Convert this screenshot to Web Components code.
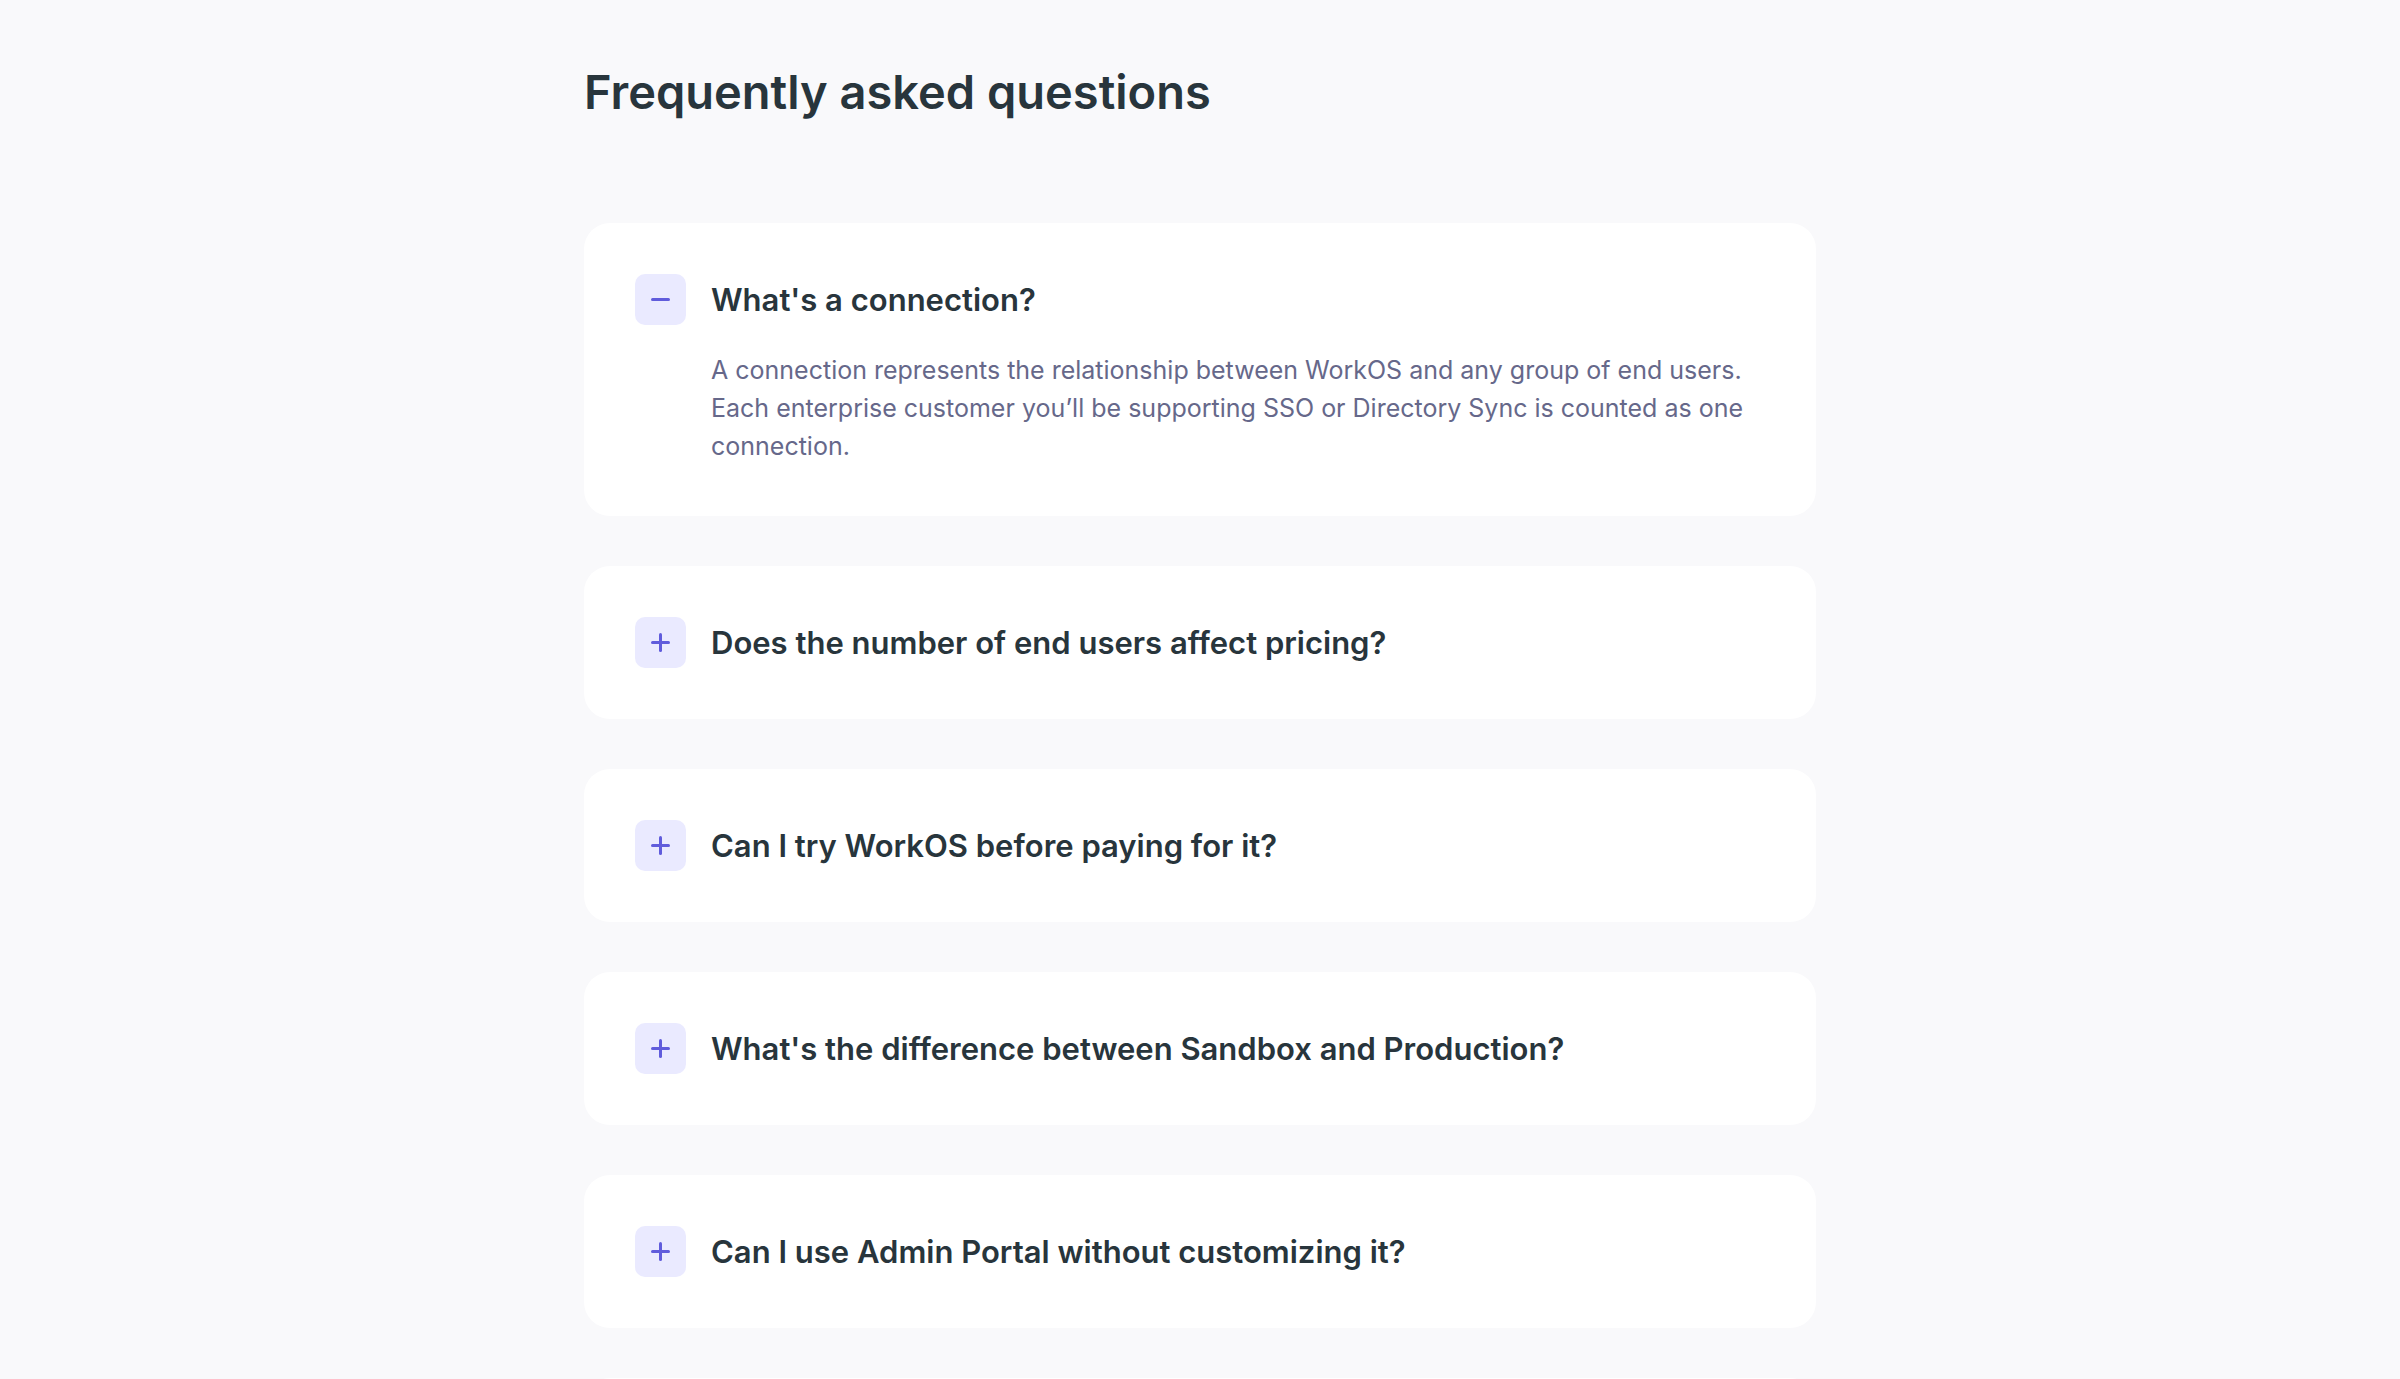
<!DOCTYPE html>
<html lang="en">
<head>
<meta charset="utf-8">
<meta name="viewport" content="width=device-width, initial-scale=1">
<title>Frequently asked questions</title>
<style>
  html {
    scrollbar-width: none;
  }

  body {
    margin: 0;
    background: #f9f9fb;
    color: #28353c;
    font-family: Inter, "Liberation Sans", sans-serif;
  }
</style>
</head>
<body>

<faq-section>
  <span slot="heading">Frequently asked questions</span>
  <faq-item open>
    <span slot="question">What's a connection?</span>
    A connection represents the relationship between WorkOS and any group of end users. Each enterprise customer you’ll be supporting SSO or Directory Sync is counted as one connection.
  </faq-item>
  <faq-item><span slot="question">Does the number of end users affect pricing?</span></faq-item>
  <faq-item><span slot="question">Can I try WorkOS before paying for it?</span></faq-item>
  <faq-item><span slot="question">What's the difference between Sandbox and Production?</span></faq-item>
  <faq-item><span slot="question">Can I use Admin Portal without customizing it?</span></faq-item>
  <faq-card></faq-card>
</faq-section>

<template id="faq-section">
  <style>
    :host {
      display: block;
      box-sizing: border-box;
      max-width: 1232px;
      margin: 0 auto;
      padding-top: 60px;
    }

    h1 {
      margin: 0 0 99px;
      font-size: 47px;
      line-height: 64px;
      font-weight: 600;
    }

    .items {
      display: flex;
      flex-direction: column;
      gap: 50px;
    }
  </style>
  <h1><slot name="heading"></slot></h1>
  <div class="items"><slot></slot></div>
</template>

<template id="faq-card">
  <style>
    :host {
      display: block;
      padding: 51px;
      border-radius: 26px;
      background: #fff;
    }
  </style>
  <slot></slot>
</template>

<template id="faq-item">
  <style>
    :host {
      display: block;
    }

    h2 {
      margin: 0;
      font: inherit;
    }

    button {
      display: flex;
      align-items: center;
      gap: 25px;
      width: 100%;
      padding: 0;
      border: 0;
      background: none;
      color: inherit;
      font: inherit;
      font-size: 31px;
      line-height: 51px;
      font-weight: 600;
      text-align: left;
      cursor: pointer;
    }

    .answer {
      margin-top: 26px;
      padding-left: 76px;
      color: #66688a;
      font-size: 25px;
      line-height: 38px;
    }

    .answer[hidden] {
      display: none;
    }
  </style>
  <faq-card>
    <h2>
      <button type="button" aria-controls="answer">
        <toggle-icon></toggle-icon>
        <slot name="question"></slot>
      </button>
    </h2>
    <div class="answer" id="answer"><slot></slot></div>
  </faq-card>
</template>

<template id="toggle-icon">
  <style>
    :host {
      display: block;
      flex: none;
      width: 51px;
      height: 51px;
      border-radius: 10px;
      background: #eaeaff;
    }

    svg {
      display: block;
      fill: none;
      stroke: #605cdc;
      stroke-width: 3;
      stroke-linecap: round;
    }

    :host([open]) .vertical {
      display: none;
    }
  </style>
  <svg width="51" height="51" viewBox="0 0 51 51" aria-hidden="true">
    <path d="M17.5 25.5h16"/>
    <path class="vertical" d="M25.5 17.5v16"/>
  </svg>
</template>

<script>
(function(){

// stamps the template with the given id into an element's shadow root
function stamp(element, id) {
  let root = element.attachShadow({mode: 'open'})
  root.appendChild(document.getElementById(id).content.cloneNode(true))
  return root
}

class FaqSection extends HTMLElement {
  constructor() {
    super()
    stamp(this, 'faq-section')
  }
}

class FaqCard extends HTMLElement {
  constructor() {
    super()
    stamp(this, 'faq-card')
  }
}

// minus when it has the open attribute, plus otherwise
class ToggleIcon extends HTMLElement {
  constructor() {
    super()
    stamp(this, 'toggle-icon')
  }
}

class FaqItem extends HTMLElement {
  static get observedAttributes() {
    return ['open']
  }

  constructor() {
    super()
    let root = stamp(this, 'faq-item')
    this.button = root.querySelector('button')
    this.icon = root.querySelector('toggle-icon')
    this.answer = root.querySelector('.answer')
    this.button.addEventListener('click', () => this.toggleAttribute('open'))
    this.update()
  }

  attributeChangedCallback() {
    this.update()
  }

  // keeps the button, the icon and the answer in step with the open attribute
  update() {
    let open = this.hasAttribute('open')
    this.button.setAttribute('aria-expanded', open)
    this.icon.toggleAttribute('open', open)
    this.answer.hidden = !open
  }
}

customElements.define('faq-card', FaqCard)
customElements.define('toggle-icon', ToggleIcon)
customElements.define('faq-item', FaqItem)
customElements.define('faq-section', FaqSection)

}())
</script>
</body>
</html>
